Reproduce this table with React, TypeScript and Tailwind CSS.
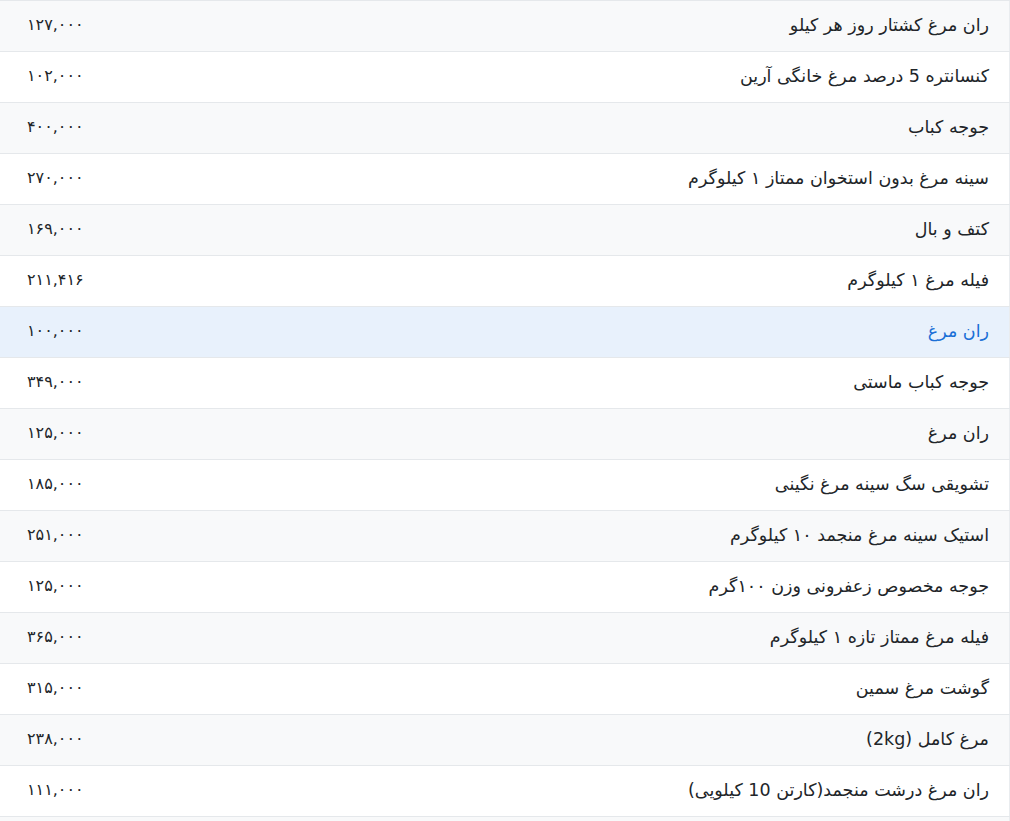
const rows: [string, string][] = [
  ['ران مرغ کشتار روز هر کیلو', '۱۲۷,۰۰۰'],
  ['کنسانتره 5 درصد مرغ خانگی آرین', '۱۰۲,۰۰۰'],
  ['جوجه کباب', '۴۰۰,۰۰۰'],
  ['سینه مرغ بدون استخوان ممتاز ۱ کیلوگرم', '۲۷۰,۰۰۰'],
  ['کتف و بال', '۱۶۹,۰۰۰'],
  ['فیله مرغ ۱ کیلوگرم', '۲۱۱,۴۱۶'],
  ['ران مرغ', '۱۰۰,۰۰۰'],
  ['جوجه کباب ماستی', '۳۴۹,۰۰۰'],
  ['ران مرغ', '۱۲۵,۰۰۰'],
  ['تشویقی سگ سینه مرغ نگینی', '۱۸۵,۰۰۰'],
  ['استیک سینه مرغ منجمد ۱۰ کیلوگرم', '۲۵۱,۰۰۰'],
  ['جوجه مخصوص زعفرونی وزن ۱۰۰گرم', '۱۲۵,۰۰۰'],
  ['فیله مرغ ممتاز تازه ۱ کیلوگرم', '۳۶۵,۰۰۰'],
  ['گوشت مرغ سمین', '۳۱۵,۰۰۰'],
  ['مرغ کامل (2kg)', '۲۳۸,۰۰۰'],
  ['ران مرغ درشت منجمد(کارتن 10 کیلویی)', '۱۱۱,۰۰۰'],
  ['', ''],
]

export default function App() {
  const hovered = 6
  return (
    <div className="bg-white h-screen overflow-hidden" style={{ fontFamily: '"DejaVu Sans", "Noto Sans", sans-serif' }}>
      <table dir="rtl" className="w-[1010px] border-collapse border-r border-[#e9ecef] text-[16px] text-[#212529]">
        <tbody>
          {rows.map(([name, price], i) => {
            const active = i === hovered
            const bg = active ? 'bg-[#e8f1fc]' : i % 2 === 0 ? 'bg-[#f8f9fa]' : 'bg-white'
            return (
              <tr key={i} className={`h-[51px] border-t border-[#e5e8eb] ${bg}`}>
                <td className={`pr-[20px] pb-[2px] text-right align-middle text-[17.5px] ${active ? 'text-[#1a6fd6]' : ''}`}>{name}</td>
                <td className="w-[200px] pl-[27px] pb-[2px] text-left align-middle">{price}</td>
              </tr>
            )
          })}
        </tbody>
      </table>
    </div>
  )
}
